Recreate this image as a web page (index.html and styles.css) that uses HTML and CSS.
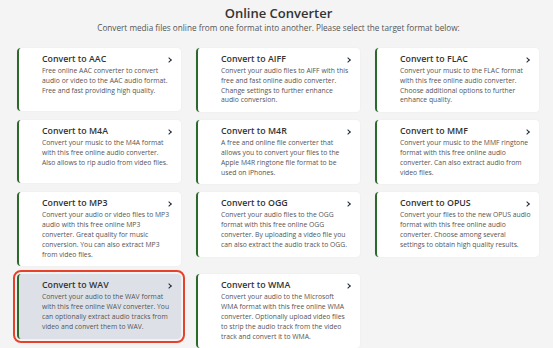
FILE: index.html
```html
<!DOCTYPE html>
<html lang="en">
<head>
<meta charset="UTF-8">
<meta name="viewport" content="width=device-width, initial-scale=1.0">
<title>Online Converter</title>
<link rel="stylesheet" href="styles.css">
</head>
<body>

<div class="page">
  <h1>Online Converter</h1>
  <p class="lead">Convert media files online from one format into another. Please select the target format below:</p>

  <div class="grid">
    <a class="card" href="#">
      <h2>Convert to AAC</h2>
      <p>Free online AAC converter to convert audio or video to the AAC audio format. Free and fast providing high quality.</p>
    </a>
    <a class="card" href="#">
      <h2>Convert to AIFF</h2>
      <p>Convert your audio files to AIFF with this free and fast online audio converter. Change settings to further enhance audio conversion.</p>
    </a>
    <a class="card" href="#">
      <h2>Convert to FLAC</h2>
      <p>Convert your music to the FLAC format with this free online audio converter. Choose additional options to further enhance quality.</p>
    </a>
    <a class="card" href="#">
      <h2>Convert to M4A</h2>
      <p>Convert your music to the M4A format with this free online audio converter. Also allows to rip audio from video files.</p>
    </a>
    <a class="card" href="#">
      <h2>Convert to M4R</h2>
      <p>A free and online file converter that allows you to convert your files to the Apple M4R ringtone file format to be used on iPhones.</p>
    </a>
    <a class="card" href="#">
      <h2>Convert to MMF</h2>
      <p>Convert your music to the MMF ringtone format with this free online audio converter. Can also extract audio from video files.</p>
    </a>
    <a class="card" href="#">
      <h2>Convert to MP3</h2>
      <p>Convert your audio or video files to MP3 audio with this free online MP3 converter. Great quality for music conversion. You can also extract MP3 from video files.</p>
    </a>
    <a class="card" href="#">
      <h2>Convert to OGG</h2>
      <p>Convert your audio files to the OGG format with this free online OGG converter. By uploading a video file you can also extract the audio track to OGG.</p>
    </a>
    <a class="card" href="#">
      <h2>Convert to OPUS</h2>
      <p>Convert your files to the new OPUS audio format with this free online audio converter. Choose among several settings to obtain high quality results.</p>
    </a>
    <a class="card selected" href="#">
      <h2>Convert to WAV</h2>
      <p>Convert your audio to the WAV format with this free online WAV converter. You can optionally extract audio tracks from video and convert them to WAV.</p>
    </a>
    <a class="card" href="#">
      <h2>Convert to WMA</h2>
      <p>Convert your audio to the Microsoft WMA format with this free online WMA converter. Optionally upload video files to strip the audio track from the video track and convert it to WMA.</p>
    </a>
  </div>
</div>

</body>
</html>
```

FILE: styles.css
```css
body {
  font-family: "Open Sans", Arial, sans-serif;
  background-color: #f4f4f4;
  color: #333;
  margin: 0;
  padding: 0;
}

.page {
  padding: 4px 13px 0 17px;
}

h1 {
  font-size: 13px;
  font-weight: 600;
  text-align: center;
  margin: 0;
  line-height: 18px;
  color: #333;
}

.lead {
  font-size: 8.2px;
  text-align: center;
  color: #555;
  margin: 0 0 14px;
  line-height: 12px;
}

.grid {
  display: grid;
  grid-template-columns: repeat(3, 164px);
  column-gap: 15px;
  row-gap: 8px;
  align-items: start;
}

.card {
  position: relative;
  display: block;
  min-height: 51px;
  padding: 5px 8px 7px 23px;
  background-color: #fff;
  border-left: 2px solid #2b6a2b;
  border-radius: 4px;
  box-shadow: 0 0 2px rgba(0, 0, 0, 0.06);
  text-decoration: none;
  color: #333;
}

.card::after {
  content: "";
  position: absolute;
  top: 10px;
  right: 10px;
  width: 3px;
  height: 3px;
  border-top: 1px solid #1f2a3a;
  border-right: 1px solid #1f2a3a;
  transform: rotate(45deg);
}

.card h2 {
  font-size: 8.8px;
  font-weight: 600;
  margin: 0 0 1px;
  line-height: 12px;
  color: #333;
}

.card p {
  font-size: 6.8px;
  line-height: 9.8px;
  margin: 0;
  color: #555;
}

.selected {
  background-color: #dde1e7;
  outline: 2px solid #e8412b;
  outline-offset: 2px;
}
```
